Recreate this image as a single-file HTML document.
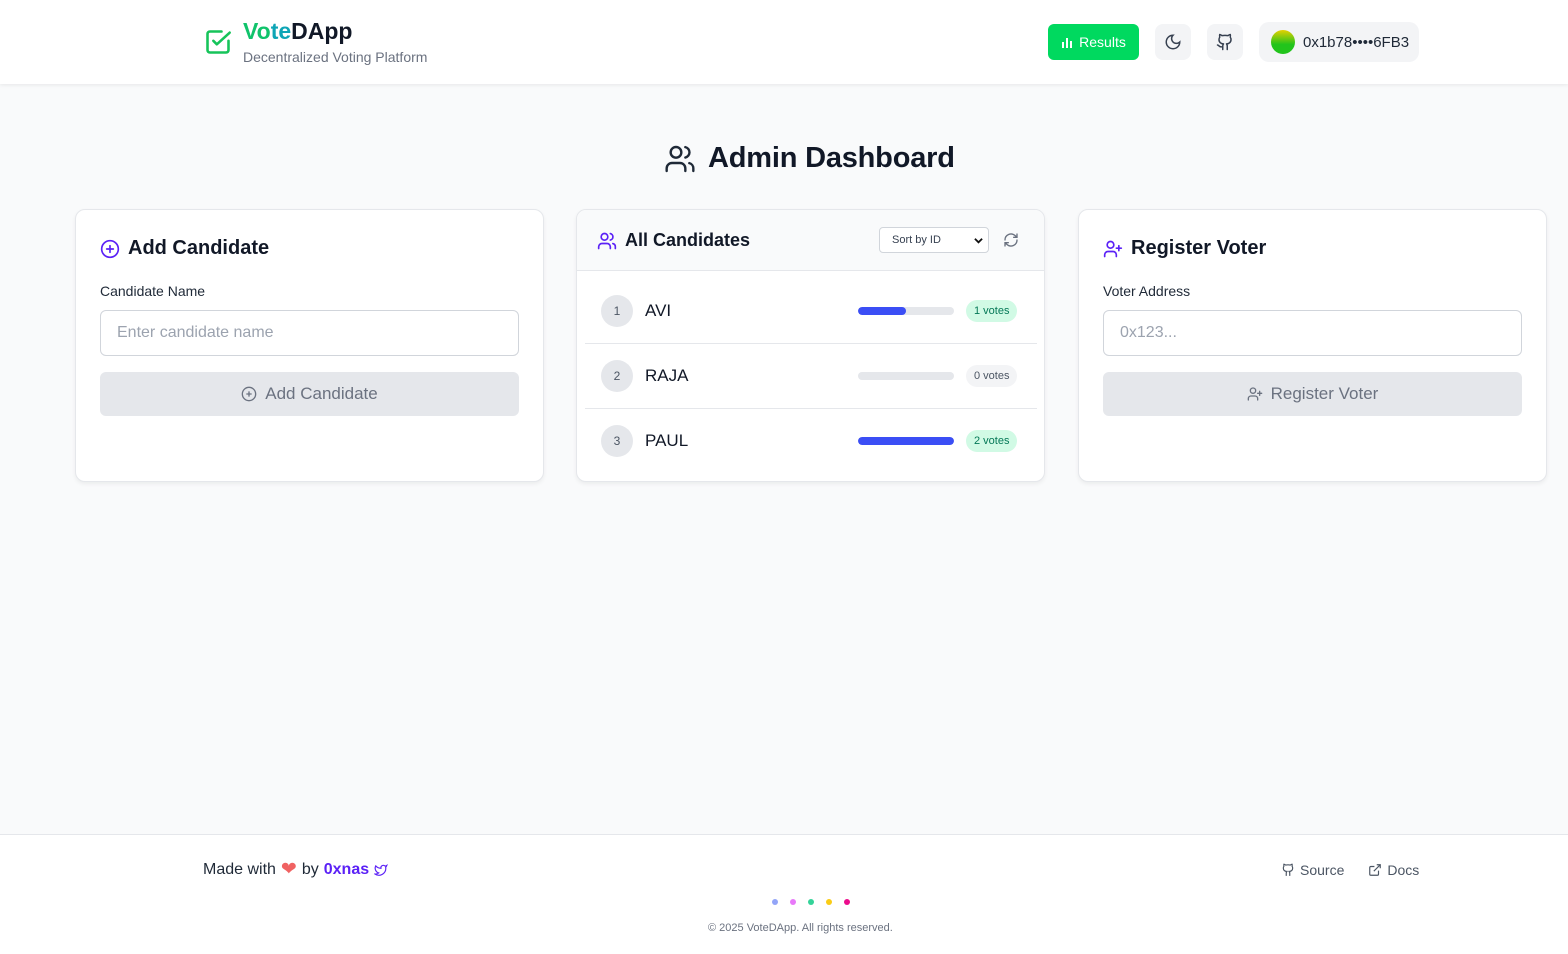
<!DOCTYPE html>
<html><head><meta charset="utf-8"><style>
*{box-sizing:border-box;margin:0;padding:0}
body{width:1568px;height:954px;background:#f9fafb;font-family:"Liberation Sans","DejaVu Sans",sans-serif;color:#111827;position:relative;overflow:hidden}
header{position:absolute;top:0;left:0;width:1568px;height:84px;background:#fff;box-shadow:0 1px 4px rgba(0,0,0,.08)}
.abs{position:absolute}
svg{display:block}
.card{position:absolute;top:209px;width:469px;height:273px;background:#fff;border:1px solid #e5e7eb;border-radius:10px;box-shadow:0 2px 4px rgba(0,0,0,.06)}
.ct{position:absolute;left:24px;top:27px;font-size:20px;font-weight:600;display:flex;align-items:center;gap:8px}
.lbl{position:absolute;left:24px;top:73px;font-size:14px;color:#1f2937}
.inp{position:absolute;left:24px;top:100px;width:419px;height:46px;border:1px solid #d1d5db;border-radius:6px;font-size:16px;color:#9ca3af;padding:13px 16px}
.btn{position:absolute;left:24px;top:162px;width:419px;height:44px;background:#e5e7eb;border-radius:6px;color:#6b7280;font-size:17px;display:flex;align-items:center;justify-content:center;gap:8px}
.row{position:absolute;left:8px;width:452px;height:65px;border-bottom:1px solid #e5e7eb}
.num{position:absolute;left:16px;top:16px;width:32px;height:32px;border-radius:50%;background:#e5e7eb;font-size:12px;color:#4b5563;text-align:center;line-height:32px}
.nm{position:absolute;left:60px;top:22px;font-size:17px}
.bar{position:absolute;left:273px;top:28px;width:96px;height:8px;border-radius:4px;background:#e5e7eb;overflow:hidden}
.bar i{display:block;height:8px;background:#3b4ef5;border-radius:4px}
.vt{position:absolute;left:381px;top:21px;height:22px;padding:0 8px;border-radius:11px;font-size:11px;line-height:22px}
</style></head><body>
<header>
<svg class="abs" style="left:204px;top:28px" width="28" height="28" viewBox="0 0 24 24" fill="none" stroke="#16c45a" stroke-width="2.2" stroke-linecap="round" stroke-linejoin="round"><path d="M21 11v8a2 2 0 0 1-2 2H5a2 2 0 0 1-2-2V5a2 2 0 0 1 2-2h10"/><path d="M8 11l3 3L22 4"/></svg>
<div class="abs" style="left:243px;top:18px;font-size:23px;font-weight:700"><span style="color:#10c36b">Vo</span><span style="color:#0ea5b6">te</span><span style="color:#111827">DApp</span></div>
<div class="abs" style="left:243px;top:49px;font-size:14px;color:#6b7280">Decentralized Voting Platform</div>
<div class="abs" style="left:1048px;top:24px;width:91px;height:36px;background:#00d95f;border-radius:6px;color:#fff;font-size:14px;display:flex;align-items:center;justify-content:center;gap:6px"><svg width="12" height="12" viewBox="0 0 12 12" fill="#fff"><rect x="1" y="6" width="2" height="6"/><rect x="5" y="2" width="2" height="10"/><rect x="9" y="5" width="2" height="7"/></svg>Results</div>
<div class="abs" style="left:1155px;top:24px;width:36px;height:36px;background:#f3f4f6;border-radius:8px"><svg style="margin:9px" width="18" height="18" viewBox="0 0 24 24" fill="none" stroke="#374151" stroke-width="2" stroke-linecap="round"><path d="M12 3a6 6 0 0 0 9 9 9 9 0 1 1-9-9z"/></svg></div>
<div class="abs" style="left:1207px;top:24px;width:36px;height:36px;background:#f3f4f6;border-radius:8px"><svg style="margin:9px" width="18" height="18" viewBox="0 0 24 24" fill="none" stroke="#374151" stroke-width="2" stroke-linecap="round" stroke-linejoin="round"><path d="M15 22v-4a4.8 4.8 0 0 0-1-3.5c3 0 6-2 6-5.5.1-1.3-.3-2.5-1-3.5.3-1.2.3-2.4 0-3.5 0 0-1 0-3 1.5-2.6-.5-5.4-.5-8 0C6 2 5 2 5 2c-.3 1.1-.3 2.3 0 3.5A5.4 5.4 0 0 0 4 9c0 3.5 3 5.5 6 5.5-.4.5-.7 1-.8 1.7-.2.6-.3 1.2-.2 1.8v4"/><path d="M9 18c-4.5 2-5-2-7-2"/></svg></div>
<div class="abs" style="left:1259px;top:22px;width:160px;height:40px;background:#f3f4f6;border-radius:10px;display:flex;align-items:center;padding-left:12px;gap:8px;font-size:15px;color:#1f2937"><span style="width:24px;height:24px;border-radius:50%;background:linear-gradient(#e6d000,#22c41c 60%)"></span>0x1b78••••6FB3</div>
</header>

<div class="abs" style="left:664px;top:142px;display:flex;align-items:center;gap:12px;font-size:29px;font-weight:700;color:#111827;letter-spacing:-0.2px"><svg width="32" height="32" viewBox="0 0 24 24" fill="none" stroke="#1f2937" stroke-width="1.8" stroke-linecap="round"><path d="M16 21v-2a4 4 0 0 0-4-4H6a4 4 0 0 0-4 4v2"/><circle cx="9" cy="7" r="4"/><path d="M22 21v-2a4 4 0 0 0-3-3.9"/><path d="M16 3.1a4 4 0 0 1 0 7.8"/></svg>Admin Dashboard</div>

<div class="card" style="left:75px">
<div class="ct"><svg width="20" height="20" viewBox="0 0 24 24" fill="none" stroke="#5b21f6" stroke-width="2" stroke-linecap="round"><circle cx="12" cy="12" r="10"/><path d="M12 8v8M8 12h8"/></svg>Add Candidate</div>
<div class="lbl">Candidate Name</div>
<div class="inp">Enter candidate name</div>
<div class="btn"><svg width="16" height="16" viewBox="0 0 24 24" fill="none" stroke="#6b7280" stroke-width="2"><circle cx="12" cy="12" r="10"/><path d="M12 8v8M8 12h8"/></svg>Add Candidate</div>
</div>

<div class="card" style="left:576px;overflow:hidden">
<div class="abs" style="left:0;top:0;width:469px;height:61px;background:#f9fafb;border-bottom:1px solid #e5e7eb"></div>
<div class="abs" style="left:20px;top:20px;display:flex;align-items:center;gap:8px;font-size:18px;font-weight:600"><svg width="20" height="20" viewBox="0 0 24 24" fill="none" stroke="#5b21f6" stroke-width="2" stroke-linecap="round"><path d="M16 21v-2a4 4 0 0 0-4-4H6a4 4 0 0 0-4 4v2"/><circle cx="9" cy="7" r="4"/><path d="M22 21v-2a4 4 0 0 0-3-3.9"/><path d="M16 3.1a4 4 0 0 1 0 7.8"/></svg>All Candidates</div>
<div class="abs" style="left:302px;top:17px;width:110px;height:26px;border:1px solid #d1d5db;border-radius:4px;background:#fff;font-size:11px;color:#374151;padding:6px 12px">Sort by ID<svg class="abs" style="right:5px;top:8px" width="9" height="9" viewBox="0 0 10 10" fill="none" stroke="#111" stroke-width="2"><path d="M1 3l4 4 4-4"/></svg></div>
<svg class="abs" style="left:426px;top:22px" width="16" height="16" viewBox="0 0 24 24" fill="none" stroke="#6b7280" stroke-width="2" stroke-linecap="round"><path d="M3 12a9 9 0 0 1 15-6.7L21 8M21 3v5h-5M21 12a9 9 0 0 1-15 6.7L3 16M3 21v-5h5"/></svg>
<div class="row" style="top:69px"><div class="num">1</div><div class="nm">AVI</div><div class="bar"><i style="width:48px"></i></div><div class="vt" style="background:#d1fae5;color:#047857">1 votes</div></div>
<div class="row" style="top:134px"><div class="num">2</div><div class="nm">RAJA</div><div class="bar"></div><div class="vt" style="background:#f3f4f6;color:#4b5563">0 votes</div></div>
<div class="row" style="top:199px;border:none"><div class="num">3</div><div class="nm">PAUL</div><div class="bar"><i style="width:96px"></i></div><div class="vt" style="background:#d1fae5;color:#047857">2 votes</div></div>
</div>

<div class="card" style="left:1078px">
<div class="ct"><svg width="20" height="20" viewBox="0 0 24 24" fill="none" stroke="#5b21f6" stroke-width="2" stroke-linecap="round"><path d="M16 21v-2a4 4 0 0 0-4-4H6a4 4 0 0 0-4 4v2"/><circle cx="9" cy="7" r="4"/><path d="M19 8v6M22 11h-6"/></svg>Register Voter</div>
<div class="lbl">Voter Address</div>
<div class="inp">0x123...</div>
<div class="btn"><svg width="16" height="16" viewBox="0 0 24 24" fill="none" stroke="#6b7280" stroke-width="2" stroke-linecap="round"><path d="M16 21v-2a4 4 0 0 0-4-4H6a4 4 0 0 0-4 4v2"/><circle cx="9" cy="7" r="4"/><path d="M19 8v6M22 11h-6"/></svg>Register Voter</div>
</div>

<div class="abs" style="left:0;top:834px;width:1568px;height:120px;background:#fff;border-top:1px solid #e5e7eb"></div>
<div class="abs" style="left:203px;top:861px;font-size:16px;color:#1f2937;display:flex;align-items:center;gap:5px">Made with <span style="color:#f06262;font-size:19px;line-height:16px">❤</span> by <span style="color:#5b21f6;font-weight:600">0xnas</span><svg width="14" height="14" viewBox="0 0 24 24" fill="none" stroke="#5b21f6" stroke-width="2"><path d="M22 4s-.7 2.1-2 3.4c1.6 10-9.4 17.3-18 11.6 2.2.1 4.4-.6 6-2C3 15.5.5 9.6 3 5c2.2 2.6 5.6 4.1 9 4-.9-4.2 4-6.6 7-3.8 1.1 0 3-1.2 3-1.2z"/></svg></div>
<div class="abs" style="left:1281px;top:862px;font-size:14px;color:#4b5563;display:flex;align-items:center;gap:5px"><svg width="14" height="14" viewBox="0 0 24 24" fill="none" stroke="#4b5563" stroke-width="2"><path d="M15 22v-4a4.8 4.8 0 0 0-1-3.5c3 0 6-2 6-5.5.1-1.3-.3-2.5-1-3.5.3-1.2.3-2.4 0-3.5 0 0-1 0-3 1.5-2.6-.5-5.4-.5-8 0C6 2 5 2 5 2c-.3 1.1-.3 2.3 0 3.5A5.4 5.4 0 0 0 4 9c0 3.5 3 5.5 6 5.5-.4.5-.7 1-.8 1.7-.2.6-.3 1.2-.2 1.8v4"/></svg>Source<span style="width:14px"></span><svg width="14" height="14" viewBox="0 0 24 24" fill="none" stroke="#4b5563" stroke-width="2"><path d="M18 13v6a2 2 0 0 1-2 2H5a2 2 0 0 1-2-2V8a2 2 0 0 1 2-2h6M15 3h6v6M10 14L21 3"/></svg>Docs</div>
<div class="abs" style="left:772px;top:899px;display:flex;gap:12px"><i style="width:6px;height:6px;border-radius:50%;background:#93a5f8"></i><i style="width:6px;height:6px;border-radius:50%;background:#e879f9"></i><i style="width:6px;height:6px;border-radius:50%;background:#34d399"></i><i style="width:6px;height:6px;border-radius:50%;background:#facc15"></i><i style="width:6px;height:6px;border-radius:50%;background:#ec0c8c"></i></div>
<div class="abs" style="left:708px;top:922px;font-size:11px;color:#6b7280;white-space:nowrap">© 2025 VoteDApp. All rights reserved.</div>
</body></html>
